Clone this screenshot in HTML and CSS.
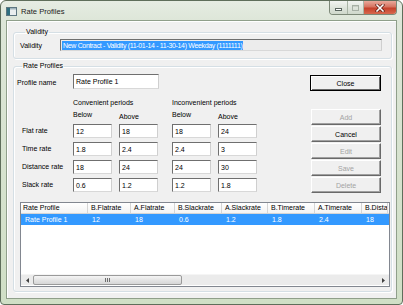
FILE: index.html
```html
<!DOCTYPE html>
<html>
<head>
<meta charset="utf-8">
<link rel="stylesheet" href="styles.css">
</head>
<body>
<div class="window">
  <div class="titlebar">
    <svg class="app-icon" width="11" height="9" viewBox="0 0 11 9">
      <rect x="0.5" y="0.5" width="10" height="8" fill="#e9eeee" stroke="#5d7680"/>
      <rect x="1" y="1" width="3" height="7" fill="#2f6f80"/>
      <rect x="4" y="1" width="6" height="1.5" fill="#9fb3bb"/>
    </svg>
    <span class="title">Rate Profiles</span>
    <div class="caption-buttons">
      <span class="cb cb-min"><i></i></span>
      <span class="cb cb-max"><i></i></span>
      <span class="cb cb-close">
        <svg width="10" height="8" viewBox="0 0 10 8">
          <path d="M2 1 L8 7 M8 1 L2 7" stroke="#5a1a10" stroke-width="3" stroke-linecap="square"/>
          <path d="M2 1 L8 7 M8 1 L2 7" stroke="#ffffff" stroke-width="1.6" stroke-linecap="square"/>
        </svg>
      </span>
    </div>
  </div>
  <div class="client">
    <fieldset class="group validity">
      <legend>Validity</legend>
      <div class="validity-row">
        <span class="label validity-label">Validity</span>
        <div class="textbox readonly"><span class="sel">New Contract - Validity (11-01-14 - 11-30-14) Weekday (1111111)</span></div>
      </div>
    </fieldset>
    <fieldset class="group profiles">
      <legend>Rate Profiles</legend>
      <div class="top">
        <div class="form">
          <span class="label name-label">Profile name</span>
          <div class="textbox name-box">Rate Profile 1</div>

          <span class="period p-conv">Convenient periods</span>
          <span class="period p-inconv">Inconvenient periods</span>

          <span class="colhead h1">Below</span>
          <span class="colhead h2 lower">Above</span>
          <span class="colhead h3">Below</span>
          <span class="colhead h4 lower">Above</span>

          <span class="label rowlabel r1">Flat rate</span>
          <div class="textbox cell c1 r1">12</div>
          <div class="textbox cell c2 r1">18</div>
          <div class="textbox cell c3 r1">18</div>
          <div class="textbox cell c4 r1">24</div>

          <span class="label rowlabel r2">Time rate</span>
          <div class="textbox cell c1 r2">1.8</div>
          <div class="textbox cell c2 r2">2.4</div>
          <div class="textbox cell c3 r2">2.4</div>
          <div class="textbox cell c4 r2">3</div>

          <span class="label rowlabel r3">Distance rate</span>
          <div class="textbox cell c1 r3">18</div>
          <div class="textbox cell c2 r3">24</div>
          <div class="textbox cell c3 r3">24</div>
          <div class="textbox cell c4 r3">30</div>

          <span class="label rowlabel r4">Slack rate</span>
          <div class="textbox cell c1 r4">0.6</div>
          <div class="textbox cell c2 r4">1.2</div>
          <div class="textbox cell c3 r4">1.2</div>
          <div class="textbox cell c4 r4">1.8</div>
        </div>
        <div class="actions">
          <button class="btn btn-default btn-close">Close</button>
          <button class="btn btn-add" disabled>Add</button>
          <button class="btn">Cancel</button>
          <button class="btn" disabled>Edit</button>
          <button class="btn" disabled>Save</button>
          <button class="btn" disabled>Delete</button>
        </div>
      </div>
      <div class="list">
        <div class="list-head">
          <span class="col w1">Rate Profile</span>
          <span class="col w2">B.Flatrate</span>
          <span class="col w3">A.Flatrate</span>
          <span class="col w4">B.Slackrate</span>
          <span class="col w5">A.Slackrate</span>
          <span class="col w6">B.Timerate</span>
          <span class="col w7">A.Timerate</span>
          <span class="col w8">B.Distancerate</span>
        </div>
        <div class="list-row selected">
          <span class="col w1 first">Rate Profile 1</span>
          <span class="col w2">12</span>
          <span class="col w3">18</span>
          <span class="col w4">0.6</span>
          <span class="col w5">1.2</span>
          <span class="col w6">1.8</span>
          <span class="col w7">2.4</span>
          <span class="col w8">18</span>
        </div>
        <div class="list-body"></div>
        <div class="hscroll">
          <span class="sb-arrow sb-left"><svg width="3" height="5" viewBox="0 0 3 5"><path d="M3 0 L0 2.5 L3 5 Z" fill="#404040"/></svg></span>
          <span class="sb-thumb"><i></i><i></i><i></i></span>
          <span class="sb-track"></span>
          <span class="sb-arrow sb-right"><svg width="3" height="5" viewBox="0 0 3 5"><path d="M0 0 L3 2.5 L0 5 Z" fill="#404040"/></svg></span>
        </div>
      </div>
    </fieldset>
  </div>
</div>
</body>
</html>
```

FILE: styles.css
```css
* { box-sizing: border-box; }

html, body {
  margin: 0;
  padding: 0;
  background: #ffffff;
}

body {
  font-family: "Liberation Sans", Arial, sans-serif;
  font-size: 7px;
  color: #000000;
  width: 403px;
  height: 305px;
  overflow: hidden;
}

.window {
  width: 403px;
  height: 305px;
  border: 1px solid #5f6e5b;
  border-radius: 6px 6px 4px 4px;
  background: linear-gradient(#e6ece3 0, #dde6d8 20px, #d0dfc6 100%);
  padding: 0 5px 5px 5px;
  display: flex;
  flex-direction: column;
}

.titlebar {
  height: 19px;
  display: flex;
  align-items: center;
  flex: none;
}

.app-icon {
  display: block;
  margin-right: 4px;
  margin-top: 1px;
}

.title {
  font-size: 7.6px;
  color: #1b1b1b;
  margin-top: 1px;
}

.caption-buttons {
  margin-left: auto;
  align-self: flex-start;
  display: flex;
  height: 14px;
  border: 1px solid #7c8877;
  border-top: none;
  border-radius: 0 0 4px 4px;
  overflow: hidden;
}

.cb {
  display: flex;
  align-items: center;
  justify-content: center;
  height: 100%;
}

.cb-min, .cb-max {
  background: linear-gradient(#f2f4f1, #dfe5dc 50%, #cfd8cb);
  border-right: 1px solid #a9b4a5;
}

.cb-min { width: 18px; }
.cb-max { width: 16px; }

.cb-min i {
  display: block;
  width: 7px;
  height: 3px;
  margin-top: 4px;
  background: #ffffff;
  border: 1px solid #5b6660;
}

.cb-max i {
  display: block;
  width: 7px;
  height: 6px;
  border: 1px solid #a7b0a5;
  box-shadow: inset 0 1px 0 #c9d0c6;
}

.cb-close {
  width: 32px;
  background: linear-gradient(#e9a99b 0, #d67360 45%, #c5412b 55%, #d7684e 100%);
}

.cb-close svg { display: block; }

.client {
  flex: 1;
  background: #f0f0f0;
  border: 1px solid #8f9f8a;
  box-shadow: inset 1px 1px 0 #ffffff;
  display: flex;
  flex-direction: column;
  padding: 0 4px 0 6px;
}

.group {
  margin: 0;
  border: 1px solid #d5dfe5;
  border-radius: 3px;
  box-shadow: 1px 1px 0 #ffffff inset, 1px 1px 0 #ffffff;
  min-width: 0;
}

.group legend {
  padding: 0 1px;
  margin-left: 5px;
  line-height: 10px;
  color: #000000;
}

.validity {
  margin-top: 6px;
  padding: 2px 9px 7px 6px;
}

.validity-row {
  display: flex;
  align-items: center;
}

.validity-label {
  width: 40px;
}

.textbox {
  background: #ffffff;
  border: 1px solid;
  border-color: #6f6f6f #cfcfcf #d8d8d8 #6f6f6f;
  padding-left: 2px;
  white-space: nowrap;
  overflow: hidden;
  display: flex;
  align-items: center;
}

.readonly {
  flex: 1;
  height: 12px;
  background: #ececec;
  padding-left: 1px;
}

.sel {
  background: #3399ff;
  color: #ffffff;
  line-height: 9px;
  padding: 0 1px;
  letter-spacing: -0.33px;
}

.profiles {
  margin-top: 2px;
  padding: 3px 10px 4px 3px;
}

.top {
  display: flex;
}

.form {
  display: grid;
  grid-template-columns: 56px 39px 7px 39px 14px 39px 7px 39px;
  grid-template-rows: 16px 19px 12px 17px 18px 18px 18px;
}

.label {
  white-space: nowrap;
}

.name-label {
  grid-column: 1;
  grid-row: 1;
  align-self: center;
  padding-top: 1px;
}

.name-box {
  grid-column: 2 / 5;
  grid-row: 1;
  height: 15px;
  width: 86px;
  align-self: start;
}

.period {
  grid-row: 2;
  align-self: end;
  line-height: 12px;
  white-space: nowrap;
}

.p-conv { grid-column: 2 / 5; }
.p-inconv { grid-column: 6 / 9; }

.colhead {
  grid-row: 3;
  line-height: 12px;
}

.colhead.lower { padding-top: 2px; }
.h1 { grid-column: 2; }
.h2 { grid-column: 4; }
.h3 { grid-column: 6; }
.h4 { grid-column: 8; }

.rowlabel {
  grid-column: 1;
  align-self: end;
  line-height: 14px;
  padding-left: 5px;
}

.cell {
  height: 14px;
  align-self: end;
}

.c1 { grid-column: 2; }
.c2 { grid-column: 4; }
.c3 { grid-column: 6; }
.c4 { grid-column: 8; }
.r1 { grid-row: 4; }
.r2 { grid-row: 5; }
.r3 { grid-row: 6; }
.r4 { grid-row: 7; }

.actions {
  margin-left: auto;
  display: flex;
  flex-direction: column;
  gap: 1px;
  width: 70px;
  padding-top: 1px;
}

.btn {
  font-family: "Liberation Sans", Arial, sans-serif;
  font-size: 7px;
  color: #000000;
  height: 16px;
  padding: 0;
  background: #f0f0f0;
  border: 1px solid;
  border-color: #ffffff #696969 #696969 #ffffff;
  box-shadow: inset -1px -1px 0 #a0a0a0;
}

.btn:disabled {
  color: #a3a3a3;
}

.btn-default {
  border: 1px solid #000000;
  box-shadow: inset 1px 1px 0 #ffffff, inset -1px -1px 0 #696969;
}

.btn-close {
  margin-left: -1px;
}

.btn-add {
  margin-top: 17px;
}

.list {
  margin-top: 9px;
  margin-left: 3px;
  width: 370px;
  height: 85px;
  background: #ffffff;
  border: 1px solid #828790;
  display: flex;
  flex-direction: column;
  overflow: hidden;
}

.list-head, .list-row {
  display: flex;
  flex: none;
  white-space: nowrap;
}

.list-head {
  height: 11px;
  background: linear-gradient(#ffffff, #f3f3f3);
  border-bottom: 1px solid #d5d5d5;
}

.list-head .col {
  border-right: 1px solid #d5d5d5;
  line-height: 10px;
}

.col {
  flex: none;
  padding-left: 3px;
  overflow: hidden;
}

.list-head .w1 { padding-left: 2px; }

.w1 { width: 67px; }
.w2 { width: 43px; }
.w3 { width: 44px; }
.w4 { width: 47px; }
.w5 { width: 46px; }
.w6 { width: 47px; }
.w7 { width: 47px; }
.w8 { width: 26px; }

.list-row {
  height: 11px;
  line-height: 11px;
}

.list-row .col { padding-left: 4px; }

.selected {
  background: #3399ff;
  color: #ffffff;
}

.list-body {
  flex: 1;
}

.hscroll {
  flex: none;
  height: 11px;
  display: flex;
  align-items: stretch;
  background: #ebebeb;
  border-top: 1px solid #f5f5f5;
  margin-bottom: 1px;
}

.sb-arrow {
  width: 12px;
  display: flex;
  align-items: center;
  justify-content: center;
}

.sb-arrow svg { display: block; }

.sb-thumb {
  width: 149px;
  border: 1px solid #9a9a9a;
  border-radius: 2px;
  background: linear-gradient(#f5f5f5, #e4e4e4 50%, #d6d6d6);
  display: flex;
  align-items: center;
  justify-content: center;
  gap: 1px;
}

.sb-thumb i {
  display: block;
  width: 1px;
  height: 4px;
  background: #6f6f6f;
}

.sb-track {
  flex: 1;
}
```
